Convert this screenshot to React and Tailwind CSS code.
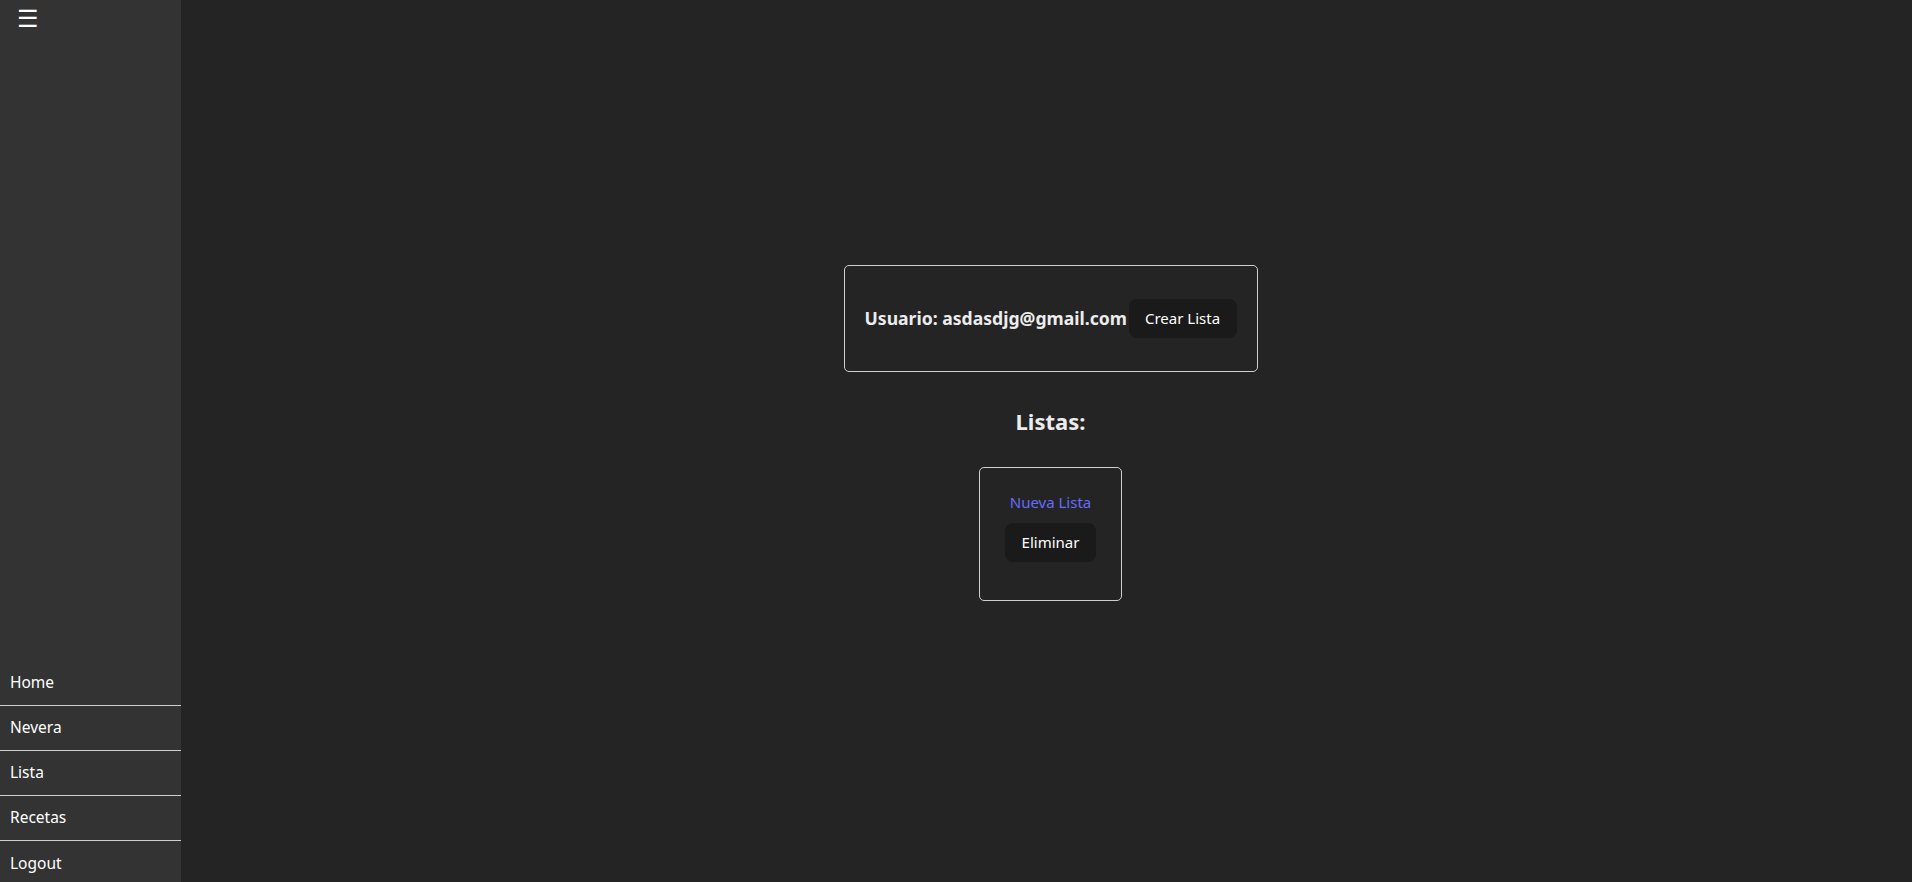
const menu = ["Home", "Nevera", "Lista", "Recetas", "Logout"];

const App = () => {
  return (
    <div
      className="flex h-[882px] w-full overflow-hidden bg-[#242424] text-white"
      style={{ fontFamily: '"Noto Sans", "Open Sans", sans-serif' }}
    >
      <aside className="flex w-[181px] shrink-0 flex-col justify-between overflow-hidden bg-[#333333]">
        <div className="pl-[17px] pt-[3px] text-[24px] leading-[30px] text-white">☰</div>
        <nav className="mb-[-4px] flex flex-col">
          {menu.map((item, i) => (
            <div
              key={item}
              className={`flex h-[45px] items-center pl-[10px] text-[15.5px] ${
                i < menu.length - 1 ? "border-b border-[#d0d0d0]" : ""
              }`}
            >
              {item}
            </div>
          ))}
        </nav>
      </aside>

      <main className="flex flex-1 flex-col items-center pt-[265px] pl-[8px]">
        <div className="flex h-[107px] w-[414px] items-center rounded-[5px] border border-[#cfcfcf] px-[20px]">
          <span className="text-[17.6px] font-bold text-[#ececec]">
            Usuario: asdasdjg@gmail.com
          </span>
          <button className="ml-auto h-[39px] w-[108px] rounded-[8px] bg-[#1a1a1a] text-[15px] text-white">
            Crear Lista
          </button>
        </div>

        <h2 className="mt-[34px] text-[22px] font-bold leading-[30px] text-[#ececec]">Listas:</h2>

        <div className="mt-[31px] flex h-[134px] w-[143px] flex-col items-center rounded-[5px] border border-[#cfcfcf] pt-[23px]">
          <span className="text-[15px] leading-[22px] text-[#646cff]">Nueva Lista</span>
          <button className="mt-[10px] h-[39px] w-[91px] rounded-[8px] bg-[#1a1a1a] text-[15px] text-white">
            Eliminar
          </button>
        </div>
      </main>
    </div>
  );
};

export default App;
